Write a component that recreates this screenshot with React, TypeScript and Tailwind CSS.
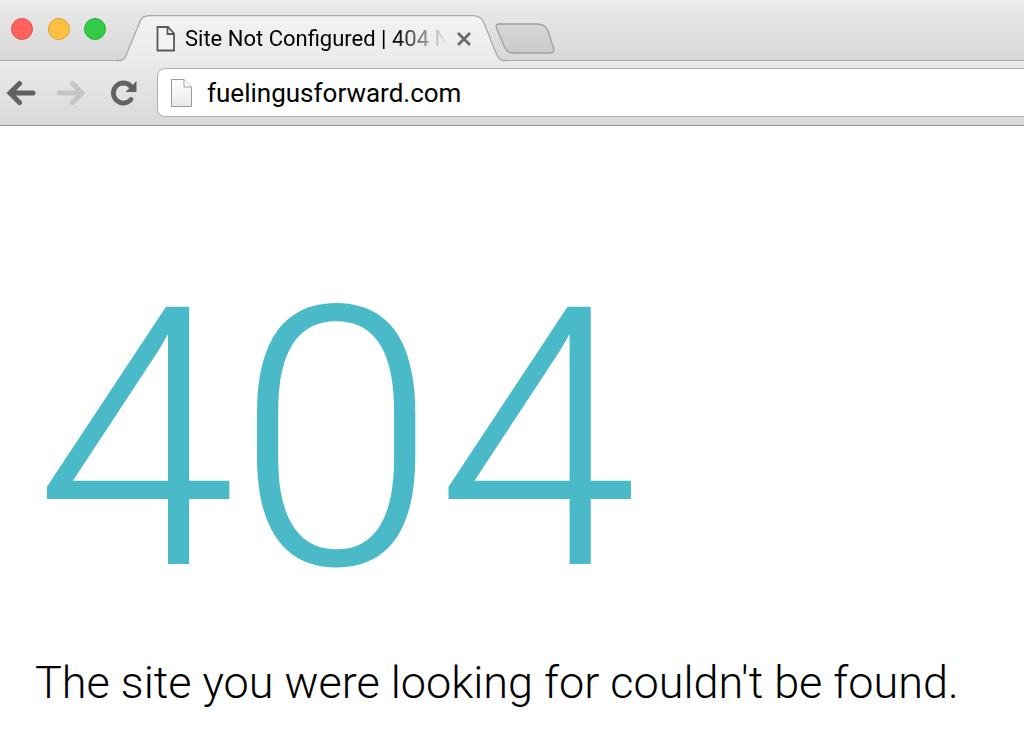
import React from "react";

function TabShape() {
  return (
    <svg viewBox="0 0 390 48" className="absolute inset-x-0 top-0 h-12 w-full" fill="none" aria-hidden="true">
      <defs>
        <linearGradient id="tab" x1="0" y1="0" x2="0" y2="1">
          <stop offset="0" stopColor="#f2f2f2" />
          <stop offset="1" stopColor="#eaeaea" />
        </linearGradient>
      </defs>
      <path d="M0 45.500H4C8 45.500 9 43 11 38L23 9C25 3 27 .7 34 .7H357C363 .7 366 3 368 8L380 38C382 43 384 45.500 387 45.500H390V48H0Z" fill="url(#tab)" />
      <path d="M0 45.500H4C8 45.500 9 43 11 38L23 9C25 3 27 .7 34 .7H357C363 .7 366 3 368 8L380 38C382 43 384 45.500 387 45.500H390" stroke="#a9a9a9" strokeWidth="1.300" />
    </svg>
  );
}

function TabPageIcon() {
  return (
    <svg width="20" height="26" viewBox="0 0 20 26" fill="none" stroke="#5a5a5a" strokeWidth="1.800" className="shrink-0" aria-hidden="true">
      <path d="M1.500 1H12L18 7.500V24.500H1.500Z" fill="#f4f4f4" />
      <path d="M11.500 1V8H18" />
    </svg>
  );
}

function AddressPageIcon() {
  return (
    <svg width="21" height="28" viewBox="0 0 21 28" fill="none" stroke="#999" className="shrink-0" aria-hidden="true">
      <defs>
        <linearGradient id="sheet" x1="0" y1="0" x2="0" y2="1">
          <stop offset="0" stopColor="#fff" />
          <stop offset="1" stopColor="#e8e8eb" />
        </linearGradient>
      </defs>
      <path d="M.5 .5H13L20.500 8V27.500H.5Z" fill="url(#sheet)" />
      <path d="M13 .5V8H20.500" fill="#fff" />
    </svg>
  );
}

function ArrowIcon() {
  return (
    <svg width="30" height="26" viewBox="0 0 30 26" fill="none" stroke="currentColor" strokeWidth="5" strokeLinecap="round" aria-hidden="true">
      <path d="M13.500 3.500L4 13L13.500 22.500M5 13H27" />
    </svg>
  );
}

function ReloadIcon() {
  return (
    <svg width="27" height="26" viewBox="0 0 27 26" fill="none" aria-hidden="true">
      <path d="M20.500 6A10 10 0 1 0 21 19.500" stroke="#626262" strokeWidth="4.800" strokeLinecap="round" />
      <path d="M26.500 1V12H15.500Z" fill="#626262" />
    </svg>
  );
}

export default function App() {
  return (
    <div className="min-h-screen overflow-hidden bg-white font-['Roboto',sans-serif] text-black">
      <header>
        <div className="flex h-[62px] items-end bg-linear-to-b from-[#ebebeb] to-[#d6d6d6] shadow-[inset_0_-1px_0_#ececec,inset_0_-2px_0_#a9a9a9]">
          <div className="flex w-[116px] shrink-0 gap-[14px] self-start pt-[18px] pl-[11px]">
            <button aria-label="Close window" className="size-[22px] rounded-full border border-[#e2504c] bg-[#ff615c]" />
            <button aria-label="Minimize window" className="ml-px size-[22px] rounded-full border border-[#dfa136] bg-[#ffbf40]" />
            <button aria-label="Zoom window" className="size-[22px] rounded-full border border-[#2bac3a] bg-[#34cb48]" />
          </div>
          <div className="relative flex h-[47px] w-[390px] shrink-0 items-center pl-10">
            <TabShape />
            <div className="relative flex items-center">
              <TabPageIcon />
              <span className="ml-[9px] w-[262px] overflow-hidden bg-linear-to-r from-black from-80% to-transparent bg-clip-text text-[22px] leading-7 whitespace-nowrap text-transparent">
                Site Not Configured | 404 N
              </span>
              <button aria-label="Close tab" className="ml-2.5 text-[#686868]">
                <svg width="14" height="14" viewBox="0 0 14 14" stroke="currentColor" strokeWidth="2.600" aria-hidden="true">
                  <path d="M1 1L13 13M13 1L1 13" />
                </svg>
              </button>
            </div>
          </div>
          <button aria-label="New tab" className="-ml-3 pb-2">
            <svg width="62" height="32" viewBox="0 0 62 32" aria-hidden="true">
              <defs>
                <linearGradient id="add" x1="0" y1="0" x2="0" y2="1">
                  <stop offset="0" stopColor="#d6d6d6" />
                  <stop offset="1" stopColor="#cacaca" />
                </linearGradient>
              </defs>
              <path d="M5 2H42C49 2 52 4 54 9L59.500 26C60.500 29 59 31 56 31H20C14 31 12 29 10 24L2.500 6C1.500 3 2.500 2 5 2Z" fill="url(#add)" stroke="#a0a0a0" strokeWidth="1.300" />
            </svg>
          </button>
        </div>
        <div className="flex h-16 items-start border-b border-[#929292] bg-linear-to-b from-[#eaeaea] to-[#d9d9d9] pt-1.5">
          <nav className="flex h-[49px] w-[157px] shrink-0 items-center pl-[6px]">
            <button aria-label="Back" className="text-[#626262]"><ArrowIcon /></button>
            <button aria-label="Forward" className="ml-5 rotate-180 text-[#c5c5c5]"><ArrowIcon /></button>
            <button aria-label="Reload" className="ml-6"><ReloadIcon /></button>
          </nav>
          <label className="-mr-2 flex h-[49px] flex-1 items-center gap-[15px] rounded-lg border border-[#b0b0b0] bg-white pl-[13px]">
            <AddressPageIcon />
            <input aria-label="Address" defaultValue="fuelingusforward.com" className="min-w-0 flex-1 bg-transparent text-[26px] leading-8 outline-none" />
          </label>
        </div>
      </header>
      <main className="px-[35px] pt-[130px]">
        <h1 className="text-[362px] leading-[368px] font-[330] text-[#4bbac8]">404</h1>
        <p className="mt-8 text-[45px] leading-[54px] font-light whitespace-nowrap">The site you were looking for couldn't be found.</p>
      </main>
    </div>
  );
}
